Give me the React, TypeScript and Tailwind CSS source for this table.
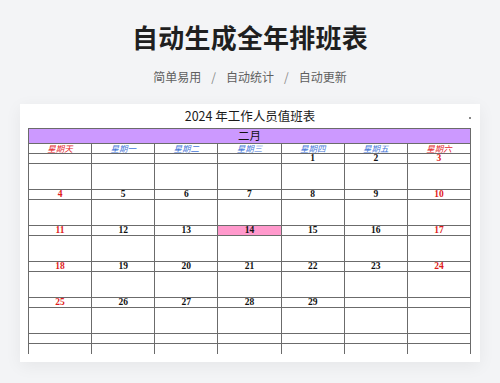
const weekdays = [
  { label: '星期天', red: true },
  { label: '星期一', red: false },
  { label: '星期二', red: false },
  { label: '星期三', red: false },
  { label: '星期四', red: false },
  { label: '星期五', red: false },
  { label: '星期六', red: true },
]

// February 2024 starts on a Thursday
const weeks: (number | null)[][] = [
  [null, null, null, null, 1, 2, 3],
  [4, 5, 6, 7, 8, 9, 10],
  [11, 12, 13, 14, 15, 16, 17],
  [18, 19, 20, 21, 22, 23, 24],
  [25, 26, 27, 28, 29, null, null],
  [null, null, null, null, null, null, null],
]

const cell = 'border-r border-b border-[#6b6b6b]'

export default function App() {
  return (
    <div className="h-[383px] w-[500px] overflow-hidden bg-[#f3f4f6] font-['Noto_Sans_CJK_SC',sans-serif]">
      <div className="flex flex-col items-center pt-[21px]">
        <h1 className="text-[26px] leading-[32px] font-bold tracking-[0.2px] text-[#1f1f1f]">
          自动生成全年排班表
        </h1>
        <div className="mt-[16px] flex items-center gap-[10px] text-[12px] leading-[16px] text-[#5f5f5f]">
          <span>简单易用</span>
          <span className="text-[#8a8a8a]">/</span>
          <span>自动统计</span>
          <span className="text-[#8a8a8a]">/</span>
          <span>自动更新</span>
        </div>
      </div>

      <div className="mx-[20px] mt-[19px] h-[258px] overflow-hidden bg-white shadow-[0_4px_16px_rgba(0,0,0,0.06)]">
        <div className="relative flex h-[24px] items-center justify-center pt-[1px] text-[12.5px] leading-none text-[#1a1a1a]">
          2024 年工作人员值班表
          <span className="absolute top-[13px] right-[9px] h-[2px] w-[2px] bg-[#888]" />
        </div>

        <div className="ml-[8px] h-[226px] w-[443px] overflow-hidden">
          <div className="grid grid-cols-7 border-t border-l border-[#6b6b6b]">
            <div className={`${cell} col-span-7 flex h-[15px] items-center justify-center bg-[#cc99ff] text-[11.5px] leading-none text-[#111]`}>
              二月
            </div>

            {weekdays.map((d) => (
              <div
                key={d.label}
                className={`${cell} flex h-[10px] items-center justify-center text-[8.5px] leading-none italic ${d.red ? 'text-[#e3262b]' : 'text-[#4677d9]'}`}
              >
                {d.label}
              </div>
            ))}

            {weeks.map((week, wi) => (
              <div key={wi} className="contents">
                {week.map((day, di) => (
                  <div
                    key={`d${di}`}
                    className={`${cell} flex h-[10px] items-center justify-center font-['Liberation_Serif',serif] text-[9.5px] leading-none font-bold ${
                      day === 14 ? 'bg-[#ff99cc]' : ''
                    } ${di === 0 || di === 6 ? 'text-[#e01b1b]' : 'text-[#111]'}`}
                  >
                    {day ?? ''}
                  </div>
                ))}
                {week.map((_, di) => (
                  <div key={`b${di}`} className={`${cell} h-[26px]`} />
                ))}
              </div>
            ))}
          </div>
        </div>
      </div>
    </div>
  )
}
